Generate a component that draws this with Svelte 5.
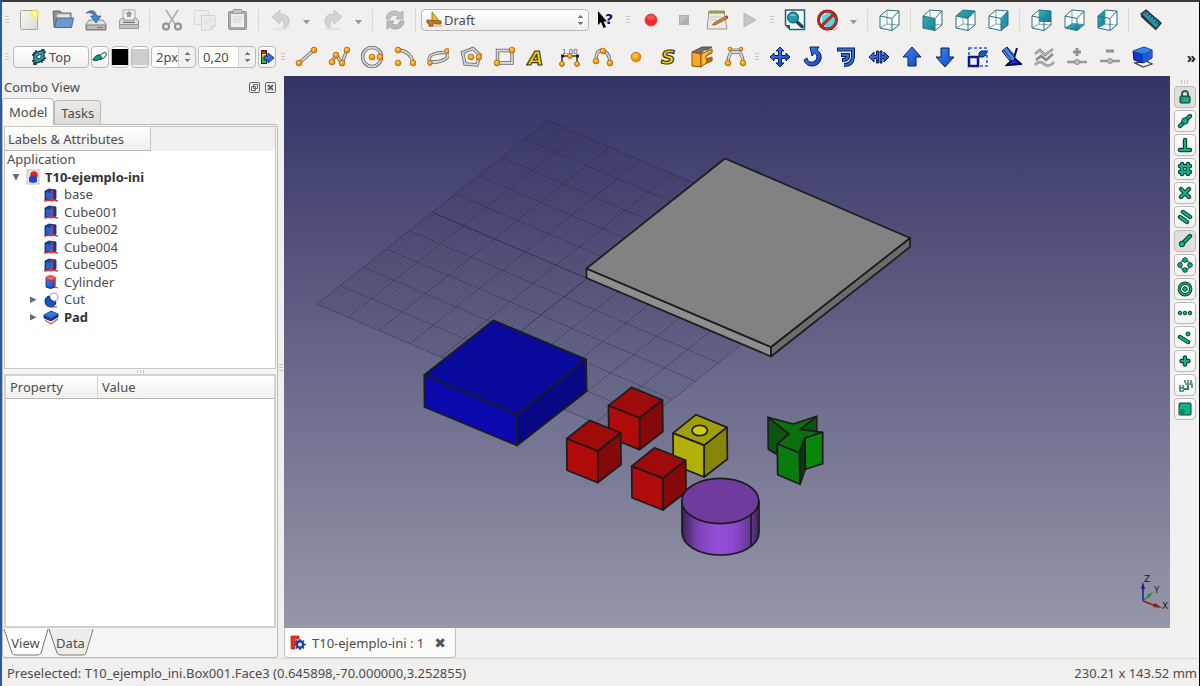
<script lang="ts">
    type Tool = { icon?: string; label?: string; kind?: "sep" | "grip" | "menu" };

    const sep: Tool = { kind: "sep" };
    const grip: Tool = { kind: "grip" };

    const ball = (x: number, y: number, r = 2.9) =>
        `<circle cx="${x}" cy="${y}" r="${r}" fill="url(#orange)" stroke="#a8660c" stroke-width=".8"/>`;

    const tube = (d: string) =>
        `<path d="${d}" fill="none" stroke="#666" stroke-width="3.4"/><path d="${d}" fill="none" stroke="#d6d6d6" stroke-width="1.8"/>`;

    const blue = (d: string) =>
        `<path d="${d}" fill="url(#blue)" stroke="#0b1f5c" stroke-width="1" stroke-linejoin="round"/>`;

    const snap = (d: string) =>
        `<path d="${d}" fill="none" stroke="#0c4038" stroke-width="4.4" stroke-linecap="round" stroke-linejoin="round"/><path d="${d}" fill="none" stroke="#12b186" stroke-width="2.2" stroke-linecap="round" stroke-linejoin="round"/>`;

    const dot = (x: number, y: number, r = 2) =>
        `<circle cx="${x}" cy="${y}" r="${r}" fill="#12b186" stroke="#0c4038" stroke-width="1"/>`;

    // Wireframe cube with one face filled
    const cube = (face = "") =>
        `<path d="M1 7L8 1L20 2V16L13 21.500L1 19Z" fill="#f8fbfb"/>${face ? `<polygon points="${face}" fill="url(#teal)"/>` : ""}<path d="M8 1V15L1 19M8 15L20 16" fill="none" stroke="#5e909b" stroke-width=".8"/><path d="M1 7L13 9.5V21.500L1 19ZM1 7L8 1L20 2L13 9.500M20 2V16L13 21.500" fill="none" stroke="#2b7180" stroke-width="1" stroke-linejoin="round"/>`;

    const icons: Record<string, string> = {
        new: `<rect x="1.500" y="1.500" width="17" height="19" rx="1" fill="url(#paper)" stroke="#a5a5a0"/><circle cx="16" cy="5" r="5" fill="#f5ee4a" opacity=".6"/><circle cx="16" cy="5" r="2.500" fill="#fff88a"/>`,
        open: `<path d="M1 2H8L10 4H19V18H2Z" fill="#8e8e8a" stroke="#6b6b68"/><path d="M5 5H18V10H5Z" fill="#e6e6e4" stroke="#aaa"/><path d="M5 9H21.500L19.500 18.500H2.500Z" fill="#6c98cb" stroke="#3d6ca5"/>`,
        save: `<path d="M4 11H18L21 15V21H1V15Z" fill="#dededc" stroke="#85858a"/><path d="M1.500 16H20.500V20.500H1.500Z" fill="#bcbcba" stroke="#7d7d7a"/><path d="M12 18.500H18" stroke="#777"/><path d="M1 4Q9-2 12 7H16L11 14L5.500 7H9Q7 3 1 4Z" fill="#4d86bd" stroke="#2a5c92" stroke-width=".7"/>`,
        print: `<path d="M5 1H17V11H5Z" fill="#f2f2f0" stroke="#aaa"/><path d="M9 8H13V5H15L11 2L7 5H9Z" fill="#9d9d9d"/><path d="M4 9L1.500 12V17H20.500V12L18 9H16V12H6V9Z" fill="#dadad8" stroke="#999"/><path d="M1.500 15.500H20.500V19.500H1.500Z" fill="#c0c0be" stroke="#999"/><path d="M5 13.500H17" stroke="#777"/>`,
        cut: `<path d="M5 1L14 15M17 1L8 15" stroke="#c4c4c4" stroke-width="2.200"/><path d="M5 1L14 15M17 1L8 15" stroke="#a0a0a0" stroke-width=".7"/><circle cx="5" cy="17.500" r="3" fill="none" stroke="#8f8f8f" stroke-width="2"/><circle cx="17" cy="17.500" r="3" fill="none" stroke="#8f8f8f" stroke-width="2"/>`,
        copy: `<rect x=".500" y="1.500" width="14" height="14" fill="#efefee" stroke="#dadad8"/><path d="M7.500 6.500H21V17L17 21H7.500Z" fill="#ececeb" stroke="#d0d0ce"/><path d="M10 10H18M10 12.500H18M10 15H16" stroke="#dadad8"/><path d="M21 17H17V21Z" fill="#fff" stroke="#c5c5c3"/>`,
        paste: `<rect x="1.500" y="2.500" width="18" height="18" rx="1" fill="#a9a9a7" stroke="#979795"/><rect x="4" y="5" width="13" height="13" fill="#ededeb"/><rect x="6" y=".500" width="9" height="4" rx="1" fill="#c6c6c4" stroke="#979795"/><path d="M6 8H15M6 10.500H15M6 13H13" stroke="#d0d0ce"/><path d="M17 14L13 18H17Z" fill="#fff"/>`,
        undo: `<path d="M2 8L10 1V5Q19 5 19 12Q19 18 13 20Q16 12 10 11V15Z" fill="#d2d2d0" stroke="#c6c6c4"/><ellipse cx="11" cy="20" rx="8" ry="1.500" fill="#e2e2e0"/>`,
        redo: `<path d="M20 8L12 1V5Q3 5 3 12Q3 18 9 20Q6 12 12 11V15Z" fill="#d2d2d0" stroke="#c6c6c4"/><ellipse cx="11" cy="20" rx="8" ry="1.500" fill="#e2e2e0"/>`,
        refresh: `<path d="M2 10Q3 2 11 2Q14 2 16 4L19 2V10H12L14 7Q8 4 6 10Z" fill="#c2c2c0" stroke="#b0b0ae"/><path d="M20 12Q19 20 11 20Q8 20 6 18L3 20V12H10L8 15Q14 18 16 12Z" fill="#bababa" stroke="#a8a8a6"/>`,
        whats: `<path d="M3 2V16L6 13L8.500 19L11 18L8.500 12.500H12Z" fill="#000"/><text x="10" y="15" font-family="DejaVu Sans" font-weight="bold" font-size="14" fill="#101080">?</text>`,
        record: `<circle cx="11" cy="11" r="6" fill="#f02c2c" stroke="#d84444"/><ellipse cx="11" cy="8.500" rx="4" ry="2.500" fill="#fb6a6a" opacity=".6"/>`,
        stop: `<rect x="6.500" y="6.500" width="9" height="9" fill="#bfbfbf" stroke="#adadad"/><path d="M7 15L15 7V15Z" fill="#b0b0b0"/>`,
        macro: `<path d="M3 2H18L21 20H1Z" fill="#e9e9e5" stroke="#999"/><path d="M2.500 2H19V4.500H2.500Z" fill="#8e8446"/><path d="M4 1V4M7 1V4M10 1V4M13 1V4M16 1V4" stroke="#c9bd66"/><path d="M4 8H16M4 11H12" stroke="#c4c4c0"/><path d="M8 14L20 7L22 9L10 15.500L6.500 16Z" fill="#d78b32" stroke="#6b3e12" stroke-width=".7"/><path d="M20 7L22 9" stroke="#d8312b" stroke-width="2"/>`,
        play: `<path d="M5 4L17 11L5 18Z" fill="#c4c4c4" stroke="#b6b6b6"/>`,
        fit: `<path d="M1.500 1H20.500V20.500H6L1.500 16Z" fill="#f5fafb" stroke="#1d6275" stroke-width="1.500"/><path d="M1.500 16H6V20.500Z" fill="#1d6275"/><path d="M12 12L18 17.500" stroke="#14495c" stroke-width="3.500" stroke-linecap="round"/><circle cx="9" cy="8.500" r="5.500" fill="#1f99ae" stroke="#14495c"/><path d="M5.500 7Q9 3 12 7Z" fill="#68cbd6"/>`,
        nodraw: `<path d="M5 7L12 3L18 7V15L11 19L5 15Z" fill="#55d6da"/><path d="M7 19L18 21L21 18" fill="none" stroke="#999"/><circle cx="10.500" cy="11" r="9" fill="none" stroke="#5c1111" stroke-width="2.900"/><circle cx="10.500" cy="11" r="9" fill="none" stroke="#cf2a2a" stroke-width="1.900"/><path d="M4.500 17L17 5" stroke="#5c1111" stroke-width="2.900"/><path d="M4.500 17L17 5" stroke="#cf2a2a" stroke-width="1.900"/>`,
        iso: cube(),
        front: cube("1,7 13,9.500 13,21.500 1,19"),
        top: cube("1,7 8,1 20,2 13,9.500"),
        right: cube("13,9.500 20,2 20,16 13,21.500"),
        rear: cube("8,1 20,2 20,13 8,13"),
        bottom: cube("1,19 8,14 20,15 13,21.500"),
        left: cube("1,7 8,1 8,15 1,19"),
        ruler: `<path d="M1 5L6 1L21 14L16 20Z" fill="#2596ad" stroke="#222" stroke-width="1.300"/><path d="M1 5L16 19V21.500L1 8Z" fill="#333"/><path d="M7 2L5 5M9.500 4.500L8 7M12 6.500L10 9.500M14.500 8.500L13 11M17 11L15 14M19 13L17.500 15" stroke="#0c3441" stroke-width=".9"/>`,

        line: tube("M4 17L19 4") + ball(4, 17) + ball(19, 4),
        wire: tube("M4 16L8 9L14 17L19 4") + ball(4, 16) + ball(8, 9) + ball(14, 17) + ball(19, 4),
        circle: tube("M1.500 11A9.500 9.500 0 1 1 20.500 11A9.500 9.500 0 1 1 1.500 11") + ball(11, 11) + ball(19, 11),
        arc: tube("M4 4Q17 5 19 17") + ball(4, 4) + ball(4, 17) + ball(19, 17),
        ellipse: tube("M2 13C2 7 20 4 21 9C22 15 2 19 2 13Z") + ball(3, 17, 2.4) + ball(20, 5, 2.4),
        polygon: tube("M2.500 6.500L13 2.500L20 9L17 19L5 18Z") + ball(11, 11) + ball(19, 11),
        rect: tube("M4.500 4.500H19V17H4.500Z") + ball(4, 17) + ball(19, 4),
        text: `<text x="2" y="19" font-family="DejaVu Sans" font-style="italic" font-weight="bold" font-size="20" fill="#f2cf10" stroke="#3b3612" stroke-width="1.200">A</text>`,
        dimension: `<text x="3" y="8" font-family="DejaVu Sans" font-size="7" fill="#555">1.00</text><path d="M3 18V10H18V18" fill="none" stroke="#333" stroke-width="1.500"/><path d="M2 8.500H5V11.500H2ZM17 8.500H20V11.500H17Z" fill="#222"/>` + ball(3, 18, 2.5) + ball(18, 18, 2.5) + ball(11, 10, 2.5),
        bspline: tube("M4 15C4 5 8 3 12 5S18 11 18 17") + ball(4, 15) + ball(11, 5) + ball(18, 17),
        point: ball(11, 11, 4.8),
        shapestring: `<text x="3" y="18" font-family="DejaVu Sans" font-style="italic" font-weight="bold" font-size="20" fill="#f2cf10" stroke="#3b3612" stroke-width="1.200">S</text>`,
        facebinder: `<path d="M1 6L11 1H21L16 4H13L10 8Z" fill="#70706c" stroke="#4d3a13" stroke-width=".8"/><path d="M1 6L10 8V21L1 20Z" fill="#f9a81c" stroke="#7e520d"/><path d="M10 8L21 3V7L15 10V13L21 11V15L14 18L10 21Z" fill="#ffb52c" stroke="#7e520d"/><path d="M15 10L21 7L18 6.500ZM15 18V13L21 11V14Z" fill="#a96d10"/>`,
        bezier: tube("M4 16Q5 6 9 6H14Q18 6 19 16") + `<path d="M5 3H19" stroke="#888"/>` + ball(4, 17) + ball(19, 17) + ball(6, 3, 1.9) + ball(17, 3, 1.9),
        move: blue("M11 1L15 5H12.500V9.500H17V7L21 11L17 15V12.500H12.500V17H15L11 21L7 17H9.500V12.500H5V15L1 11L5 7V9.500H9.500V5H7Z"),
        rotate: blue("M8 1L17 1L15 4Q20 7 19 13Q17 20 10 20Q4 20 2 14L5 12Q6 17 11 16Q15 15 15 11Q15 8 12.500 7L10 10Z"),
        offset: `<path d="M2 3.500H18V11Q17 19 9 19M6 9H13V11Q12 14 7 14" fill="none" stroke="#0b1f5c" stroke-width="4"/><path d="M3 3.500H18V11Q17 19 9.500 19M7 9H13V11Q12 14 8 14" fill="none" stroke="#2e72e2" stroke-width="2"/>`,
        trim: blue("M1 11L6 6V9.500H8.500V5H10.500V17H8.500V12.500H6V16ZM21 11L16 6V9.500H14V5H12V17H14V12.500H16V16Z"),
        up: blue("M11 1L20 11H15V20H7V11H2Z"),
        down: blue("M11 21L20 11H15V2H7V11H2Z"),
        scale: `<rect x="2" y="2" width="18" height="18" fill="none" stroke="#1f62ee" stroke-width="1.600" stroke-dasharray="3 2"/><path d="M2 11H11V20H2Z" fill="#e8f0ff" stroke="#101a80" stroke-width="2.500"/><path d="M12 10V7L14 5H19V9L16 11H13Z" fill="#2257c4" stroke="#101a50"/>`,
        edit: `<path d="M17 2L14 12L21 18L7 19L12 14" fill="#1f2ce0" stroke="#060a60" stroke-width="2"/><path d="M2 5L7 1L15 10L14 15L9 14Z" fill="#4b8de3" stroke="#111c55"/><path d="M4 4L11 13M7 2L14 11" stroke="#122f77"/>`,
        wire2spline: `<path d="M2 8L7 4L12 9L20 3M2 19Q6 14 11 18T21 16M3 14L8 10L13 14L20 8" fill="none" stroke="#8b8b89" stroke-width="2.600"/><path d="M2 8L7 4L12 9L20 3M2 19Q6 14 11 18T21 16" fill="none" stroke="#cacac8" stroke-width="1"/>`,
        addpoint: `<path d="M11 2V10M7 6H15" stroke="#929290" stroke-width="3"/><path d="M1 16H21" stroke="#999" stroke-width="2.500"/><circle cx="11" cy="16" r="2.500" fill="#c1c1bf" stroke="#888"/>`,
        delpoint: `<path d="M7 5H15" stroke="#929290" stroke-width="3"/><path d="M1 15H21" stroke="#999" stroke-width="2.500"/><circle cx="11" cy="15" r="2.500" fill="#c1c1bf" stroke="#888"/>`,
        shape2d: `<path d="M3 17L14 15L20 18L11 21Z" fill="#eee" stroke="#444" stroke-width="1.300"/><path d="M1 5L12 1L20 4V12L11 17L2 14Z" fill="#1238c8" stroke="#07135a"/><path d="M1 5L12 1L20 4L11 8Z" fill="#3582e5"/><path d="M11 8L20 4V12L11 17Z" fill="#215fd0"/>`,

        plane: `<path d="M3 4L13 1V11L3 15ZM5 1V16M1 12L15 9M11 0V14M1 6L15 3" fill="none" stroke="#123d48" stroke-width="1.500"/><path d="M4 5L12 2V10L4 13Z" fill="#35b6b3" stroke="#1d7987"/><path d="M6 7L10 5V9L6 10Z" fill="#fff" stroke="#123d48"/>`,
        pencil: `<path d="M1 11Q3 6 8 6L13 3Q16 4 13 8L8 11Q7 9 5 11Z" fill="#e9efee" stroke="#1c514a"/><path d="M1 11Q3 6 8 6L10 9L5 11.500Z" fill="#099c83" stroke="#1c514a"/>`,
        apply: `<rect x="2" y="1" width="6" height="14" fill="#222"/><path d="M3 2H7V5H3Z" fill="#e31d1d"/><path d="M3 5H7V8H3Z" fill="#f5d41c"/><path d="M3 8H7V14H3Z" fill="#27c43c"/><path d="M5 7H9V4L15 9L9 14V11H5Z" fill="#3c6fe3" stroke="#15327d"/>`,
        draft: `<path d="M2 14H17" stroke="#aaa"/><path d="M6 10V0L14 10Z" fill="#e9c21a" stroke="#7b6410" stroke-width=".8"/><path d="M1 8L15 9V12H9L7 10V14H3V11H1Z" fill="#cc761a" stroke="#814509" stroke-width=".8"/>`,
        app: `<path d="M1 1H9V4H5V6H8V9H5V14H1Z" fill="#e8341c" stroke="#a51a0a" stroke-width=".6"/><circle cx="10" cy="9.500" r="3.200" fill="#dce8ff" stroke="#1f3f9c" stroke-width="2.400"/><path d="M10 4V6M10 13V15M4.500 9.500H6M14 9.500H16M6 5.500L7.500 7M14 5.500L12.500 7M6 13.500L7.500 12M14 13.500L12.500 12" stroke="#1f3f9c" stroke-width="1.500"/>`,

        doc: `<rect x="2" y="1" width="12" height="14" fill="#e7e7ea" stroke="#c2c2c8"/><circle cx="9" cy="6" r="3.800" fill="#dd2424"/><path d="M4 8L8 6L12 8V13L8 14L4 13Z" fill="#2646b8"/>`,
        box: `<path d="M2 4L6 2L13 3V12L9 14L2 13Z" fill="#1740a0" stroke="#0b1c55" stroke-width=".8"/><path d="M3 5L9 6V13L3 12Z" fill="#2861d0"/><path d="M9 3V13M1 14L9 13L15 14" fill="none" stroke="#e5392d" stroke-width="1.400"/>`,
        cylinder: `<path d="M3 4V13Q8 16 12 13V4" fill="url(#blue)" stroke="#0b1c55" stroke-width=".8"/><ellipse cx="7.500" cy="4" rx="4.500" ry="2.200" fill="#e96a62" stroke="#d42f25"/><path d="M12 3V13L15 14" fill="none" stroke="#e5392d" stroke-width="1.200"/>`,
        boolcut: `<circle cx="11" cy="5" r="4" fill="#fff" stroke="#9aa2b5"/><path d="M6 4A5.500 5.500 0 1 0 13 10Q7 10 6 4Z" fill="#1d52c0" stroke="#0c266b"/><path d="M7 15H14" stroke="#555"/>`,
        pad: `<path d="M2 11L8 15L15 10" fill="none" stroke="#e0503c" stroke-width="1.200"/><path d="M1 6L8 2L15 5V8L8 12L1 9Z" fill="#163f9b" stroke="#0a1e55" stroke-width=".8"/><path d="M1 6L8 2L15 5L8 9Z" fill="#2f74d8"/>`,

        lock: `<path d="M5 8V5Q5 2 8 2T11 5V8" fill="none" stroke="#315e57" stroke-width="2"/><rect x="3" y="7" width="10" height="7" rx="1" fill="#129476" stroke="#0c4038"/><path d="M6 10H12M6 12H12" stroke="#62c9ae" stroke-width=".7"/>`,
        midpoint: snap("M3 13L13 3") + dot(8, 8, 3.2),
        perpendicular: snap("M8 3V12M3 13H13"),
        grid: snap("M5 3V13M11 3V13M3 5H13M3 11H13"),
        intersection: snap("M4 4L12 12M12 4L4 12"),
        parallel: snap("M3 8L10 13M6 3L13 8"),
        endpoint: snap("M5 11L13 3") + dot(5, 11, 2.8),
        angle: `<circle cx="8" cy="8" r="4.800" fill="none" stroke="#3f6d63" stroke-width="1.500"/>` + dot(8, 3, 2.3) + dot(8, 13, 2.3) + dot(3, 8, 2.3) + dot(13, 8, 2.3),
        center: `<circle cx="8" cy="8" r="5.700" fill="none" stroke="#0c4038" stroke-width="3.400"/><circle cx="8" cy="8" r="5.700" fill="none" stroke="#12b186" stroke-width="1.500"/>` + dot(8, 8, 2.3),
        extension: dot(3, 8, 1.8) + dot(8, 8, 1.8) + dot(13, 8, 1.8),
        near: snap("M3 8L11 13") + dot(11, 5, 2),
        ortho: snap("M8 4.500V11.500M4.500 8H11.500"),
        dimensions: `<path d="M3 8V14H7M6 8V11H2M8 7H15V11M8 3V6M11 3V6M14 3V6" fill="none" stroke="#347e70" stroke-width="1.500"/><path d="M6 12H11V8" fill="none" stroke="#347e70" stroke-width="2"/>`,
        wp: `<rect x="2" y="2" width="12" height="12" rx="1" fill="#12b186" stroke="#0c4038"/><circle cx="5.500" cy="10.500" r="1.600" fill="none" stroke="#0c4038"/>`,
    };

    const fileTools: Tool[] = [
        grip,
        { icon: "new", label: "New" },
        { icon: "open", label: "Open" },
        { icon: "save", label: "Save" },
        { icon: "print", label: "Print" },
        sep,
        { icon: "cut", label: "Cut" },
        { icon: "copy", label: "Copy" },
        { icon: "paste", label: "Paste" },
        sep,
        { icon: "undo", label: "Undo" },
        { kind: "menu", label: "Undo history" },
        { icon: "redo", label: "Redo" },
        { kind: "menu", label: "Redo history" },
        sep,
        { icon: "refresh", label: "Refresh" },
        sep,
    ];

    const viewTools: Tool[] = [
        { icon: "whats", label: "What's this?" },
        grip,
        { icon: "record", label: "Record macro" },
        { icon: "stop", label: "Stop macro" },
        { icon: "macro", label: "Macros" },
        { icon: "play", label: "Execute macro" },
        grip,
        { icon: "fit", label: "Fit all" },
        { icon: "nodraw", label: "Draw style" },
        { kind: "menu", label: "Draw styles" },
        sep,
        { icon: "iso", label: "Axometric" },
        sep,
        { icon: "front", label: "Front" },
        { icon: "top", label: "Top view" },
        { icon: "right", label: "Right" },
        sep,
        { icon: "rear", label: "Rear" },
        { icon: "bottom", label: "Bottom" },
        { icon: "left", label: "Left" },
        sep,
        { icon: "ruler", label: "Measure distance" },
    ];

    const draftTools: Tool[] = [
        grip,
        ...["line", "wire", "circle", "arc", "ellipse", "polygon", "rect", "text", "dimension", "bspline", "point", "shapestring", "facebinder", "bezier"].map((icon) => ({ icon, label: icon })),
        grip,
        ...["move", "rotate", "offset", "trim", "up", "down", "scale", "edit", "wire2spline", "addpoint", "delpoint", "shape2d"].map((icon) => ({ icon, label: icon })),
    ];

    const snaps = ["lock", "midpoint", "perpendicular", "grid", "intersection", "parallel", "endpoint", "angle", "center", "extension", "near", "ortho", "dimensions", "wp"];
    let activeSnaps = $state(["lock", "endpoint"]);

    function toggleSnap(name: string) {
        activeSnaps = activeSnaps.includes(name)
            ? activeSnaps.filter((s) => s !== name)
            : [...activeSnaps, name];
    }

    const items = [
        { name: "base", icon: "box" },
        { name: "Cube001", icon: "box" },
        { name: "Cube002", icon: "box" },
        { name: "Cube004", icon: "box" },
        { name: "Cube005", icon: "box" },
        { name: "Cylinder", icon: "cylinder" },
        { name: "Cut", icon: "boolcut", expandable: true },
        { name: "Pad", icon: "pad", expandable: true, bold: true },
    ];

    let open = $state(true);
    let comboTab = $state("Model");
    let propTab = $state("View");
    let workbench = $state("Draft");
    let lineWidth = $state("2px");
    let fontSize = $state("0,20");

    // Working plane grid: 10 x 10 squares, each split in 10
    const steps = Array.from({ length: 101 }, (_, i) => i);
    const gridLine = (i: number, along: boolean) => {
        const t = i / 100;
        return along
            ? `M${547.7 - 230.4 * t} ${120.7 + 183.3 * t}l309 132`
            : `M${547.7 + 309 * t} ${120.7 + 132 * t}l-230.4 183.3`;
    };
    const gridPath = (list: number[]) =>
        list.map((i) => gridLine(i, true) + gridLine(i, false)).join("");
    const minor = gridPath(steps.filter((i) => i % 10));
    const major = gridPath(steps.filter((i) => i % 10 === 0));
    const axes = gridPath([50]);
</script>

{#snippet glyph(name: string, size: number)}
    <svg class="glyph" width={size} height={size} viewBox="0 0 {size} {size}" aria-hidden="true">
        {@html icons[name]}
    </svg>
{/snippet}

{#snippet tools(list: Tool[])}
    {#each list as tool}
        {#if tool.kind === "sep"}
            <span class="sep"></span>
        {:else if tool.kind === "grip"}
            <span class="grip"></span>
        {:else if tool.kind === "menu"}
            <button class="menu-btn" aria-label={tool.label}></button>
        {:else}
            <button class="tool" aria-label={tool.label}>{@render glyph(tool.icon ?? "", 22)}</button>
        {/if}
    {/each}
{/snippet}

{#snippet smallCube(x: number, y: number, top: string, left: string, right: string)}
    <g transform="translate({x} {y})">
        <polygon points="0,0 31,12.700 8.200,30.700 -23,18.400" fill={top} />
        <polygon points="-23,18.400 8.200,30.700 8.200,62.300 -22.700,50" fill={left} />
        <polygon points="8.200,30.700 31,12.700 31.400,44.300 8.200,62.300" fill={right} />
    </g>
{/snippet}

<svg class="defs" width="0" height="0" aria-hidden="true">
    <defs>
        <radialGradient id="orange" cx=".4" cy=".35">
            <stop offset="0" stop-color="#ffd060" />
            <stop offset="1" stop-color="#f79000" />
        </radialGradient>
        <linearGradient id="blue" x2="1" y2="1">
            <stop offset="0" stop-color="#3c86f0" />
            <stop offset="1" stop-color="#1246c8" />
        </linearGradient>
        <linearGradient id="teal" x2="1" y2="1">
            <stop offset="0" stop-color="#2fb4c2" />
            <stop offset="1" stop-color="#0d7d90" />
        </linearGradient>
        <linearGradient id="paper" y2="1">
            <stop offset="0" stop-color="#f6f6f4" />
            <stop offset="1" stop-color="#dcdcd8" />
        </linearGradient>
    </defs>
</svg>

<div class="window">
    <header>
        <div class="toolbar">
            {@render tools(fileTools)}
            <label class="workbench">
                {@render glyph("draft", 18)}
                <select bind:value={workbench} aria-label="Workbench">
                    <option>Draft</option>
                    <option>Part</option>
                </select>
                <span class="updown"></span>
            </label>
            {@render tools(viewTools)}
        </div>
        <div class="toolbar second">
            <span class="grip"></span>
            <div class="tray">
                <button class="push plane">{@render glyph("plane", 16)}Top</button>
                <button class="push" aria-label="Construction mode">{@render glyph("pencil", 16)}</button>
                <button class="push" aria-label="Line color"><i class="swatch line"></i></button>
                <button class="push" aria-label="Face color"><i class="swatch face"></i></button>
                <label class="spin width">
                    <input bind:value={lineWidth} aria-label="Line width" />
                    <span class="updown"></span>
                </label>
                <label class="spin size">
                    <input bind:value={fontSize} aria-label="Font size" />
                    <span class="updown"></span>
                </label>
                <button class="push" aria-label="Apply style">{@render glyph("apply", 16)}</button>
            </div>
            {@render tools(draftTools)}
            <button class="more" aria-label="More tools">»</button>
        </div>
    </header>

    <main>
        <aside class="dock">
            <div class="dock-title">
                <span>Combo View</span>
                <button aria-label="Float">
                    <svg width="11" height="11" viewBox="0 0 11 11"><rect x=".500" y=".500" width="10" height="10" rx="1.500" /><path d="M4.500 2.500H8.500V6.500H4.500ZM2.500 4.500H6.500V8.500H2.500Z" /></svg>
                </button>
                <button aria-label="Close">
                    <svg width="11" height="11" viewBox="0 0 11 11"><rect x=".500" y=".500" width="10" height="10" rx="1.500" /><path d="M3 3L8 8M8 3L3 8" stroke-width="2" /></svg>
                </button>
            </div>
            <div class="tabs">
                {#each ["Model", "Tasks"] as tab}
                    <button class:active={comboTab === tab} onclick={() => (comboTab = tab)}>{tab}</button>
                {/each}
            </div>
            <div class="pane">
                <div class="tree">
                    <div class="tree-head"><span>Labels &amp; Attributes</span></div>
                    <ul>
                        <li>Application</li>
                        <li class="document">
                            <button class="expander" class:open aria-label="Toggle document" onclick={() => (open = !open)}></button>
                            {@render glyph("doc", 16)}
                            <b>T10-ejemplo-ini</b>
                        </li>
                        {#if open}
                            {#each items as item}
                                <li class="object">
                                    {#if item.expandable}
                                        <button class="expander" aria-label="Expand {item.name}"></button>
                                    {:else}
                                        <span class="expander-gap"></span>
                                    {/if}
                                    {@render glyph(item.icon, 16)}
                                    <span class:bold={item.bold}>{item.name}</span>
                                </li>
                            {/each}
                        {/if}
                    </ul>
                </div>
                <div class="splitter"></div>
                <div class="properties">
                    <table>
                        <thead>
                            <tr><th class="prop">Property</th><th>Value</th></tr>
                        </thead>
                        <tbody></tbody>
                    </table>
                </div>
                <div class="bottom-tabs">
                    {#each ["View", "Data"] as tab}
                        <button class:active={propTab === tab} onclick={() => (propTab = tab)}>
                            <svg viewBox="0 0 46 27" width="46" height="27" aria-hidden="true"><path d="M1 0L9 24Q10 26 13 26H34Q37 26 38 24L45 0" /></svg>
                            <span>{tab}</span>
                        </button>
                    {/each}
                </div>
            </div>
        </aside>
        <div class="handle"></div>

        <section class="mdi">
            <div class="viewport">
                <svg viewBox="284 76 886 552" preserveAspectRatio="xMidYMid slice" role="img" aria-label="3D view">
                    <defs>
                        <linearGradient id="side">
                            <stop offset="0" stop-color="#3c2159" />
                            <stop offset=".200" stop-color="#7b43b3" />
                            <stop offset=".450" stop-color="#954fda" />
                            <stop offset=".650" stop-color="#8f4cd0" />
                            <stop offset=".900" stop-color="#643792" />
                            <stop offset="1" stop-color="#3c2159" />
                        </linearGradient>
                    </defs>
                    <g class="grid">
                        <path d={minor} opacity=".15" />
                        <path d={major} class="major" opacity=".4" />
                        <path d={axes} class="major" opacity=".3" />
                    </g>
                    <g class="solid">
                        <polygon points="586.500,268.500 771,347 771,356.500 586.500,278" fill="#8e8e8e" />
                        <polygon points="771,347 910,238 910,247 771,356.500" fill="#6c6c6c" />
                        <polygon points="725,158.500 910,238 771,347 586.500,268.500" fill="#828282" />

                        <polygon points="424.300,375 517,414.300 517,445.500 424.500,407" fill="#0a0aaf" />
                        <polygon points="517,414.300 586,359.300 586.700,391 517,445.500" fill="#080884" />
                        <polygon points="493.300,320.300 586,359.300 517,414.300 424.300,375" fill="#0a0a9c" />

                        {@render smallCube(631.5, 387.3, "#9e0b0b", "#b00a0a", "#840909")}
                        {@render smallCube(589.7, 420.3, "#9e0b0b", "#b00a0a", "#840909")}
                        {@render smallCube(696, 414.7, "#a09f0a", "#b1b00b", "#86850a")}
                        <ellipse cx="699.700" cy="430.500" rx="7.700" ry="5.200" fill="#cfce0c" />
                        {@render smallCube(654.7, 447.7, "#9e0b0b", "#b00a0a", "#840909")}

                        <path d="M682 501V532.500A38.500 22.500 0 0 0 759 532.500V501Z" fill="url(#side)" />
                        <path d="M751 515V545" />
                        <ellipse cx="720.300" cy="501" rx="38.500" ry="22.600" fill="#6f3c9e" />

                        <polygon points="768,417.300 789,434 777.300,444 777,454.500 768.300,449.300" fill="#0a5510" />
                        <polygon points="800.300,429.300 816.700,416.300 816.700,431 805,433" fill="#0a5510" />
                        <polygon points="768,417.300 793.300,424 816.700,416.300 800.300,429.300 822.700,432.300 805,438 799.300,453 777.300,444 789,434" fill="#0a700c" />
                        <polygon points="799.300,453 805,438 805.300,469.300 800,484.300" fill="#0b3a0e" />
                        <polygon points="777.300,444 799.300,453 800,484.300 777.700,474.700" fill="#0a7c0e" />
                        <polygon points="805,438 822.700,432.300 822.700,463.700 805.300,469.300" fill="#0a860d" />
                    </g>
                    <g class="axis">
                        <path d="M1143 601V588" stroke="#1c1c8c" />
                        <path d="M1141 589L1143 582L1145 589Z" fill="#1c1c8c" />
                        <path d="M1143 601L1150 595" stroke="#1b8a28" />
                        <path d="M1153 592L1147 595L1149 598Z" fill="#1b8a28" />
                        <path d="M1143 601L1156 606" stroke="#8c1c1c" />
                        <path d="M1162 608L1153 607L1155 603Z" fill="#8c1c1c" />
                        <text x="1144" y="582">Z</text>
                        <text x="1154" y="593">Y</text>
                        <text x="1162" y="609">X</text>
                    </g>
                </svg>
            </div>
            <div class="doc-tabs">
                <div class="doc-tab">
                    {@render glyph("app", 16)}
                    <span>T10-ejemplo-ini : 1</span>
                    <button aria-label="Close document">✖</button>
                </div>
            </div>
        </section>

        <nav class="snapbar">
            <span class="grip-h"></span>
            {#each snaps as name}
                <button class:on={activeSnaps.includes(name)} aria-label="Snap {name}" onclick={() => toggleSnap(name)}>
                    {@render glyph(name, 16)}
                </button>
            {/each}
        </nav>
    </main>

    <footer>
        <span>Preselected: T10_ejemplo_ini.Box001.Face3 (0.645898,-70.000000,3.252855)</span>
        <span>230.21 x 143.52 mm</span>
    </footer>
</div>

<style>
    :global(body) {
        background: #f1f0ee;
    }

    .defs {
        position: absolute;
    }

    .window {
        display: flex;
        flex-direction: column;
        min-height: 100vh;
        box-sizing: border-box;
        border-top: 2px solid #3c3b37;
        border-left: 2px solid #2b5aa5;
        border-right: 1px solid #000;
        background: #f1f0ee;
        color: #4c4c4c;
        font-family: "Noto Sans", "Open Sans", sans-serif;
        font-size: 13px;
        line-height: 18px;
    }

    button {
        border: 0;
        padding: 0;
        background: none;
        color: inherit;
        font: inherit;
    }

    .glyph {
        display: block;
        flex: none;
    }

    .toolbar {
        display: flex;
        align-items: center;
        height: 36px;
    }

    .toolbar.second {
        height: 38px;
    }

    .tool {
        display: flex;
        justify-content: center;
        align-items: center;
        width: 33px;
        height: 33px;
        flex: none;
    }

    .grip {
        width: 12px;
        height: 8px;
        flex: none;
        background: repeating-linear-gradient(#c9c8c5 0 1px, transparent 1px 3px) 4px 0 / 4px 8px no-repeat;
    }

    .grip:first-child {
        width: 11px;
        background-position: 3px 0;
    }

    .sep {
        width: 1px;
        height: 22px;
        margin: 0 5px 0 4px;
        background: #d8d7d4;
        flex: none;
    }

    .menu-btn {
        width: 19px;
        height: 30px;
        flex: none;
    }

    .menu-btn::before {
        content: "";
        display: block;
        width: 8px;
        height: 5px;
        margin: 4px auto 0;
        background: #9b9b99;
        clip-path: polygon(0 0, 100% 0, 50% 100%);
    }

    .workbench {
        position: relative;
        width: 168px;
        flex: none;
    }

    .workbench .glyph {
        position: absolute;
        left: 5px;
        top: 3px;
    }

    .workbench select {
        display: block;
        width: 100%;
        height: 22px;
        padding: 0 20px 0 22px;
        border: 1px solid #b9b7b4;
        border-radius: 4px;
        background: linear-gradient(#fff, #efeeec);
        color: #4c4c4c;
        font: inherit;
        appearance: none;
    }

    .updown {
        width: 5px;
        height: 10px;
        background:
            conic-gradient(from 135deg at 50% 0, #777 90deg, transparent 0) 0 0 / 5px 3px no-repeat,
            conic-gradient(from -45deg at 50% 100%, #777 90deg, transparent 0) 0 100% / 5px 3px no-repeat;
    }

    .workbench .updown {
        position: absolute;
        right: 6px;
        top: 6px;
    }

    .tray {
        display: flex;
        gap: 2px;
        width: 264px;
        flex: none;
    }

    .push {
        display: flex;
        justify-content: center;
        align-items: center;
        box-sizing: border-box;
        width: 18px;
        height: 22px;
        flex: none;
        border: 1px solid #bcbab7;
        border-radius: 4px;
        background: linear-gradient(#fff, #f0efed);
    }

    .plane {
        width: 76px;
        gap: 2px;
    }

    .swatch {
        width: 16px;
        height: 16px;
        flex: none;
    }

    .swatch.line {
        background: #000;
    }

    .swatch.face {
        background: #ccc;
    }

    .spin {
        display: flex;
        align-items: center;
        gap: 6px;
        box-sizing: border-box;
        height: 22px;
        padding-right: 5px;
        border: 1px solid #bcbab7;
        border-radius: 4px;
        background: #f1f0ee;
    }

    .spin.width {
        width: 45px;
    }

    .spin.size {
        width: 58px;
    }

    .spin input {
        flex: 1;
        min-width: 0;
        height: 20px;
        box-sizing: border-box;
        padding: 0 0 0 4px;
        border: 0;
        border-right: 1px solid #d5d3d0;
        border-radius: 3px 0 0 3px;
        background: #fff;
        color: #4c4c4c;
        font: inherit;
    }

    .more {
        margin: 0 3px 0 auto;
        color: #222;
        font-size: 15px;
        font-weight: 700;
    }

    main {
        display: flex;
        flex: 1;
    }

    .dock {
        display: flex;
        flex-direction: column;
        width: 276px;
        flex: none;
    }

    .dock-title {
        display: flex;
        align-items: center;
        gap: 5px;
        height: 22px;
        padding: 0 2px;
    }

    .dock-title span {
        flex: 1;
    }

    .dock-title svg {
        display: block;
        fill: none;
        stroke: #686764;
    }

    .tabs {
        display: flex;
        align-items: flex-end;
        height: 26px;
    }

    .tabs button {
        height: 24px;
        padding: 0 6px;
        border: 1px solid #bdbbb7;
        border-bottom: 0;
        border-radius: 4px 4px 0 0;
        background: linear-gradient(#eceae8, #dddbd8);
    }

    .tabs .active {
        height: 27px;
        margin-bottom: -1px;
        background: linear-gradient(#fff, #f6f6f5);
        position: relative;
    }

    .pane {
        display: flex;
        flex-direction: column;
        flex: 1;
        border: 1px solid #bdbbb7;
        border-radius: 0 3px 3px 3px;
        background: #f5f5f4;
    }

    .tree {
        height: 241px;
        margin: 1px;
        border: 1px solid #c9c6c3;
        background: #fff;
    }

    .tree-head {
        height: 24px;
        background: #f1f0ee;
    }

    .tree-head span {
        display: block;
        box-sizing: border-box;
        width: 146px;
        height: 24px;
        padding: 3px;
        border-right: 1px solid #c9c6c3;
        border-bottom: 1px solid #b9b4b0;
        background: linear-gradient(#fff, #f0efed);
    }

    .tree ul {
        display: grid;
        grid-auto-rows: 1fr;
        height: 175px;
        margin: 0;
        padding: 0 0 0 2px;
        list-style: none;
    }

    .tree li {
        display: flex;
        align-items: center;
        min-height: 0;
        line-height: 17px;
    }

    .document {
        gap: 4px;
        padding-left: 4px;
    }

    .document b,
    .bold {
        color: #333;
        font-weight: 700;
    }

    .object {
        gap: 5px;
        padding-left: 21px;
    }

    .expander,
    .expander-gap {
        width: 10px;
        height: 10px;
        flex: none;
    }

    .expander::before {
        content: "";
        display: block;
        width: 7px;
        height: 7px;
        margin: auto;
        background: #6b6a68;
        clip-path: polygon(0 0, 100% 50%, 0 100%);
    }

    .expander.open::before {
        clip-path: polygon(0 0, 100% 0, 50% 100%);
    }

    .splitter {
        height: 3px;
        background: repeating-linear-gradient(90deg, #c4c2bf 0 1px, transparent 1px 3px) center / 7px 3px no-repeat;
    }

    .properties {
        flex: 1;
        margin: 1px;
        border: 2px solid #d3d1ce;
        background: #fff;
    }

    table {
        width: 100%;
        border-collapse: collapse;
    }

    th {
        height: 22px;
        padding: 0 4px;
        border-bottom: 1px solid #b9b4b0;
        background: linear-gradient(#fff, #f0efed);
        font-weight: 400;
        text-align: left;
    }

    .prop {
        width: 83px;
        border-right: 1px solid #d3d1ce;
    }

    .bottom-tabs {
        display: flex;
        height: 28px;
    }

    .bottom-tabs button {
        position: relative;
        width: 45px;
        height: 27px;
    }

    .bottom-tabs svg {
        position: absolute;
        inset: 0;
    }

    .bottom-tabs path {
        fill: #eeedeb;
        stroke: #777673;
    }

    .bottom-tabs .active path {
        fill: #fff;
    }

    .bottom-tabs span {
        position: relative;
    }

    .handle {
        width: 6px;
        flex: none;
        background: repeating-linear-gradient(#c4c2bf 0 1px, transparent 1px 3px) center / 4px 7px no-repeat;
    }

    .mdi {
        display: flex;
        flex-direction: column;
        flex: 1;
        min-width: 0;
    }

    .viewport {
        position: relative;
        flex: 1;
        background: linear-gradient(#333366, #9797aa);
    }

    .viewport svg {
        position: absolute;
        inset: 0;
        width: 100%;
        height: 100%;
    }

    .grid path {
        fill: none;
        stroke: #1c1c38;
        stroke-width: 0.7;
    }

    .grid .major {
        stroke-width: 1;
    }

    .solid {
        fill: none;
        stroke: #1c1c1c;
        stroke-width: 1.7;
        stroke-linejoin: round;
    }

    .axis {
        stroke-width: 1.5;
    }

    .axis text {
        fill: #1a1a1a;
        font-family: "DejaVu Sans", sans-serif;
        font-size: 9px;
    }

    .doc-tabs {
        height: 30px;
    }

    .doc-tab {
        display: flex;
        align-items: center;
        gap: 6px;
        box-sizing: border-box;
        width: 172px;
        height: 30px;
        padding: 0 9px 0 5px;
        border: 1px solid #c4c2bf;
        border-top: 0;
        border-radius: 0 0 4px 4px;
        background: #fbfbfa;
        white-space: nowrap;
    }

    .doc-tab button {
        margin-left: auto;
        color: #555;
        font-family: "DejaVu Sans", sans-serif;
        font-size: 14px;
    }

    .snapbar {
        display: flex;
        flex-direction: column;
        align-items: center;
        gap: 2px;
        width: 29px;
        flex: none;
    }

    .grip-h {
        width: 7px;
        height: 4px;
        margin: 4px 0 0;
        background: repeating-linear-gradient(90deg, #c9c8c5 0 1px, transparent 1px 3px);
    }

    .snapbar button {
        display: flex;
        justify-content: center;
        align-items: center;
        box-sizing: border-box;
        width: 22px;
        height: 22px;
        border: 1px solid #bcbab7;
        border-radius: 4px;
        background: linear-gradient(#fff, #f3f2f0);
    }

    .snapbar .on {
        background: #e0dfdc;
    }

    footer {
        display: flex;
        align-items: center;
        justify-content: space-between;
        height: 28px;
        box-sizing: border-box;
        padding: 0 2px 0 5px;
        border-top: 1px solid #dddcd9;
    }
</style>
